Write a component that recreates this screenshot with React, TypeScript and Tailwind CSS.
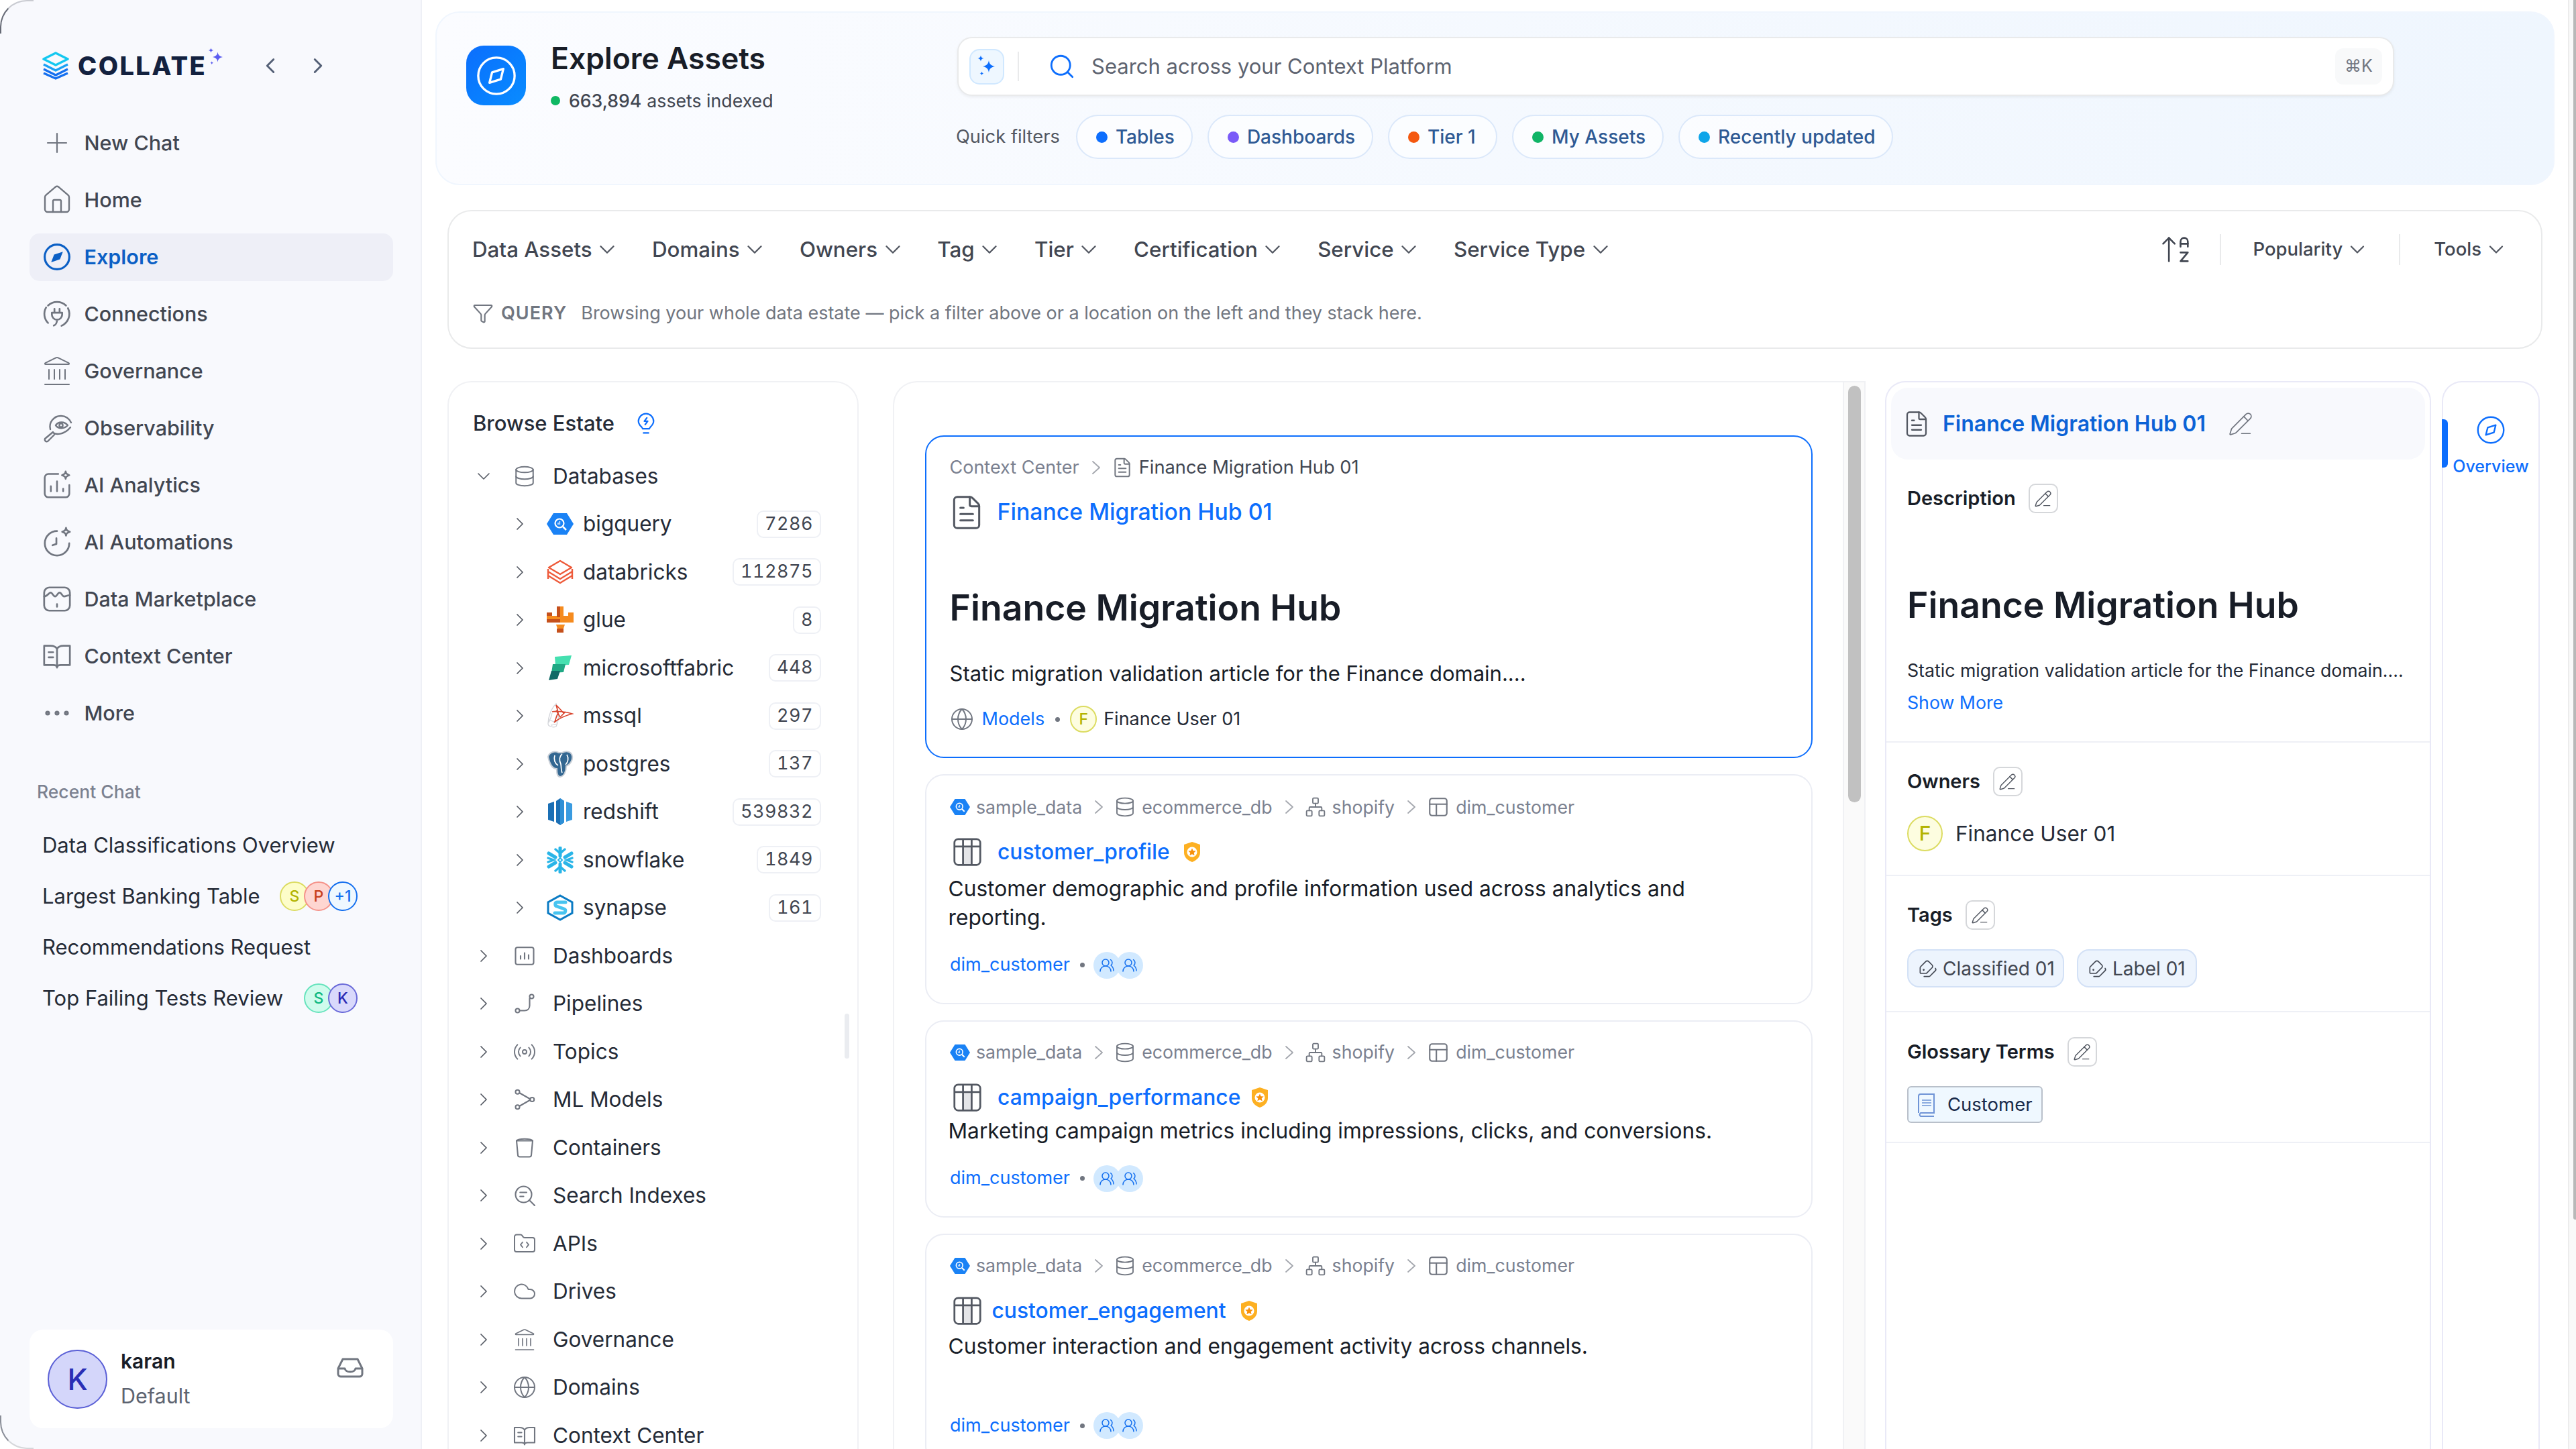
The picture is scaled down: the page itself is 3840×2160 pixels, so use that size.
import { ReactNode } from "react";
import {
  ArrowUpAZ,
  ChevronDown,
  ChevronLeft,
  ChevronRight,
  Cloud,
  Database,
  Ellipsis,
  FileText,
  FolderCode,
  Funnel,
  Globe,
  House,
  Landmark,
  Network,
  PencilLine,
  Plus,
  Radio,
  Search,
  Tags,
  UsersRound,
} from "lucide-react";

function Stroke({ size, children, color = "#717680", width = 1.4 }: { size: number; children: ReactNode; color?: string; width?: number }) {
  return (
    <svg width={size} height={size} viewBox="0 0 24 24" fill="none" stroke={color} strokeWidth={width} strokeLinecap="round" strokeLinejoin="round">
      {children}
    </svg>
  );
}

function Sparkles({ size, color }: { size: number; color: string }) {
  return (
    <svg width={size} height={size} viewBox="0 0 24 24" fill={color}>
      <path d="M14 6c.6 3.6 2 5.2 6 6-4 .8-5.4 2.4-6 6-.6-3.6-2-5.2-6-6 4-.8 5.400-2.400 6-6Z" />
      <path d="M6 1c.3 1.900 1 2.600 3 3-2 .4-2.700 1.100-3 3-.3-1.900-1-2.600-3-3 2-.4 2.700-1.100 3-3Z" />
      <path d="M7 17c.2 1.300.8 1.800 2 2-1.200.2-1.800.7-2 2-.2-1.300-.8-1.800-2-2 1.200-.2 1.800-.7 2-2Z" />
    </svg>
  );
}

function ExploreIcon() {
  return (
    <svg width="42" height="42" viewBox="0 0 24 24" fill="none">
      <circle cx="12" cy="12" r="10.500" stroke="#0b5fc5" strokeWidth="1.800" />
      <path d="M17 7.500 14.500 14 7 16.500 9.500 10Z" fill="#0b5fc5" />
    </svg>
  );
}

function CompassLine({ size, color, width }: { size: number; color: string; width: number }) {
  return (
    <svg width={size} height={size} viewBox="0 0 24 24" fill="none" stroke={color} strokeWidth={width} strokeLinejoin="round">
      <circle cx="12" cy="12" r="10.500" />
      <path d="M16 8 14.500 14 8 16 9.500 10Z" />
    </svg>
  );
}

const navIcons: Record<string, ReactNode> = {
  "New Chat": <Plus size={50} color="#717680" strokeWidth={1.1} />,
  Home: <House size={50} color="#717680" strokeWidth={1.2} />,
  Explore: <ExploreIcon />,
  Connections: (
    <Stroke size={46}>
      <path d="M5 5.500A10 10 0 0 1 19 5.500M20.500 7.500a10 10 0 0 1-5 13.700M5 19a10 10 0 0 1-1.500-12" />
      <path d="M8 11h8v1.500a4 4 0 0 1-8 0ZM10 8v3M14 8v3M12 16.500c0 2-1 4-2.500 4.500" />
    </Stroke>
  ),
  Governance: <Landmark size={56} color="#717680" strokeWidth={1} />,
  Observability: (
    <Stroke size={50} width={1.2}>
      <path d="M7 13a8 8 0 0 1 8-10 8 8 0 0 1 7.500 5M9 15.500c2 1.500 8 2 13-4" />
      <path d="M11 10c2-3 6.500-3 9 0-2.500 2.700-7 3-9 0Z" />
      <circle cx="15" cy="10" r="1.300" />
      <path d="M9 15 3 20a1.500 1.500 0 0 0 2 2l5-5" />
    </Stroke>
  ),
  "AI Analytics": (
    <Stroke size={44}>
      <path d="M13 3H5a3 3 0 0 0-3 3v13a3 3 0 0 0 3 3h14a3 3 0 0 0 3-3v-7" />
      <path d="M7 17v-4M12 17V9M17 17v-2" />
      <path d="M19 1c.3 1.700.8 2.200 3 3-2.200.8-2.700 1.300-3 3-.3-1.700-.8-2.200-3-3 2.200-.8 2.700-1.300 3-3Z" />
    </Stroke>
  ),
  "AI Automations": (
    <Stroke size={46}>
      <path d="M12 3.500a9.500 9.500 0 1 0 9.500 9.500" />
      <path d="M11.500 9v4.500l-3 1" />
      <path d="M19 1c.3 1.700.8 2.200 3 3-2.200.8-2.700 1.300-3 3-.3-1.700-.8-2.200-3-3 2.200-.8 2.700-1.300 3-3Z" />
    </Stroke>
  ),
  "Data Marketplace": (
    <Stroke size={46}>
      <rect x="2" y="3" width="20" height="18" rx="4" />
      <path d="M2 10c2.500 0 3.500-3 5-3s2 3 3.500 3S12.500 7 14 7s2 3 3.500 3 2.500-1 4.500-1M12 16v2" />
    </Stroke>
  ),
  "Context Center": (
    <Stroke size={46}>
      <path d="M12 6.500C11 4.500 9 4 7 4H2v15h7c1.700 0 3 .5 3 2 0-1.500 1.300-2 3-2h7V4h-5c-2 0-4 .5-5 2.500ZM12 6.500V21M5.500 9H9M5.500 13H9" />
    </Stroke>
  ),
  More: <Ellipsis size={56} color="#717680" strokeWidth={1.6} />,
};

function NavItem({ label, active }: { label: string; active?: boolean }) {
  return (
    <div className={active ? "flex h-[71px] items-center rounded-[15px] bg-[#eeeff7] pl-[17px] text-[30.500px] font-semibold text-[#0b5fc5]" : "flex h-[71px] items-center rounded-[15px] pl-[17px] text-[30.500px] font-medium text-[#414651]"}>
      <span className="flex w-[48px] items-center justify-center">{navIcons[label]}</span>
      <span className="ml-[16.500px]">{label}</span>
    </div>
  );
}

type BubbleProps = { text: string; className: string };

function Bubble({ text, className }: BubbleProps) {
  return <span className={"flex h-[44px] w-[44px] items-center justify-center rounded-full border-2 text-[23px] font-medium " + className}>{text}</span>;
}

function Sidebar() {
  return (
    <aside className="flex h-full w-[629px] shrink-0 flex-col rounded-l-[40px] border-r-2 border-[#eef0f6] bg-[#f8f9fd] pr-[41px] pl-[44px]">
      <div className="mt-[68px] flex h-[60px] items-center pl-[19px]">
        <svg width="40" height="42" viewBox="0 0 40 42" fill="none" strokeWidth="3.500" strokeLinejoin="round">
          <path d="M2 11 20 2l18 9-18 9Z" stroke="#14c8f0" fill="none" />
          <path d="M2 19l18 9 18-9" stroke="#1aa0f5" />
          <path d="M2 26l18 9 18-9" stroke="#1570ef" />
          <path d="M2 32l18 8 18-8" stroke="#1570ef" />
        </svg>
        <span className="ml-[13px] text-[38px] font-extrabold leading-none tracking-[2.400px] text-[#13213f]">COLLATE</span>
        <span className="-mt-[26px] -ml-[1px]">
          <Sparkles size={30} color="#5a5cf0" />
        </span>
        <ChevronLeft size={38} color="#535f75" strokeWidth={1.800} className="ml-[47px]" />
        <ChevronRight size={38} color="#535f75" strokeWidth={1.800} className="ml-[33px]" />
      </div>
      <nav className="mt-[49.500px] flex flex-col gap-[14px]">
        <NavItem label="New Chat" />
        <NavItem label="Home" />
        <NavItem label="Explore" active />
        <NavItem label="Connections" />
        <NavItem label="Governance" />
        <NavItem label="Observability" />
        <NavItem label="AI Analytics" />
        <NavItem label="AI Automations" />
        <NavItem label="Data Marketplace" />
        <NavItem label="Context Center" />
        <NavItem label="More" />
      </nav>
      <p className="mt-[62.500px] flex h-[40px] items-center pl-[11px] text-[26.500px] font-medium text-[#7b8190]">Recent Chat</p>
      <div className="mt-[37px] flex w-[489px] flex-col gap-[32px] pl-[19px] text-[31px] text-[#252b37]">
        <div className="flex h-[44px] items-center">Data Classifications Overview</div>
        <div className="flex h-[44px] items-center justify-between">
          Largest Banking Table
          <span className="flex">
            <Bubble text="S" className="border-[#dcdc62] bg-[#fdfdc9] text-[#b3b300]" />
            <Bubble text="P" className="-ml-[8px] border-[#f5938a] bg-[#fed6d1] text-[#c8401d]" />
            <Bubble text="+1" className="-ml-[8px] border-[#1570ef] bg-[#eff8ff] text-[#1570ef]" />
          </span>
        </div>
        <div className="flex h-[44px] items-center">Recommendations Request</div>
        <div className="flex h-[44px] items-center justify-between">
          Top Failing Tests Review
          <span className="flex">
            <Bubble text="S" className="border-[#66e3bd] bg-[#cffbec] text-[#10b981]" />
            <Bubble text="K" className="-ml-[8px] border-[#6a6ad9] bg-[#d9d9fb] text-[#2a2ab5]" />
          </span>
        </div>
      </div>
      <div className="mt-auto mb-[31px] flex h-[147px] items-center rounded-[20px] bg-white pl-[27px]">
        <span className="flex h-[88px] w-[89px] items-center justify-center rounded-full border-2 border-[#5a5fd6] bg-[#d4d6fa] text-[44px] font-medium text-[#2a2fb5]">K</span>
        <div className="-mt-[2px] ml-[20px] flex flex-col">
          <span className="text-[30px] leading-[52px] font-semibold text-[#181d27]">karan</span>
          <span className="text-[30.500px] leading-[52px] text-[#5d6370]">Default</span>
        </div>
        <svg className="mt-[-34px] ml-auto mr-[44px]" width="40" height="30" viewBox="0 0 40 30" fill="none" stroke="#717680" strokeWidth="3" strokeLinejoin="round">
          <path d="M9 2h22l7 14v8a4 4 0 0 1-4 4H6a4 4 0 0 1-4-4v-8Z" />
          <path d="M2 16h10c1 4 4 5 8 5s7-1 8-5h10" />
        </svg>
      </div>
    </aside>
  );
}

type PillProps = { label: string; dot: string; className?: string };

function Pill({ label, dot, className = "" }: PillProps) {
  return (
    <span className={"flex h-[66px] items-center gap-[12px] rounded-full border-2 border-[#dbe8fa] bg-white/60 pr-[25px] pl-[28px] text-[28px] font-medium text-[#2f5a94] " + className}>
      <span className={"h-[17px] w-[17px] rounded-full " + dot} />
      {label}
    </span>
  );
}

function Hero() {
  return (
    <section className="mx-[-18px] flex h-[259px] shrink-0 rounded-[36px] border-2 border-[#f0f6fe] bg-gradient-to-r from-[#fbfcff] to-[#eff6fe] pt-[36px] pl-[44px]">
      <div className="flex w-[732px] pt-[13px]">
        <span className="flex h-[89px] w-[89px] items-center justify-center rounded-[26px] bg-gradient-to-br from-[#0d6efd] to-[#0a8cff]">
          <CompassLine size={62} color="white" width={1.300} />
        </span>
        <div className="ml-[37px]">
          <h1 className="flex h-[38px] items-center text-[44.500px] font-semibold text-[#181d27]">Explore Assets</h1>
          <p className="mt-[27px] flex h-[34px] items-center text-[#414651]">
            <span className="mr-[13px] h-[14px] w-[14px] rounded-full bg-[#0fb863]" />
            <span className="text-[26.700px] font-medium">663,894</span>
            <span className="ml-[8px] text-[26.700px]">assets indexed</span>
          </p>
        </div>
      </div>
      <div className="w-[2142px]">
        <div className="flex h-[88px] items-center rounded-[22px] border-2 border-[#e9eaeb] bg-white pl-[16px] shadow-[0_2px_4px_rgba(10,13,18,0.06)]">
          <span className="flex h-[53px] w-[52px] items-center justify-center rounded-[15px] border-2 border-[#d0e8ff] bg-[#eef7ff]">
            <Sparkles size={36} color="#0d6efd" />
          </span>
          <span className="ml-[20px] h-[44px] w-[2px] bg-[#e9eaeb]" />
          <Search size={42} color="#0d6efd" strokeWidth={1.600} className="ml-[43px]" />
          <span className="ml-[23px] text-[31px] text-[#5d6370]">Search across your Context Platform</span>
          <span className="mr-[16px] ml-auto flex h-[54px] w-[70px] items-center justify-center rounded-[12px] bg-[#f8f9fa] text-[25px] text-[#717680]">⌘K</span>
        </div>
        <div className="mt-[28px] flex items-center">
          <span className="-ml-[2px] text-[27.300px] text-[#535862]">Quick filters</span>
          <div className="ml-[24px] flex gap-[22px]">
            <Pill label="Tables" dot="bg-[#0d6efd]" />
            <Pill label="Dashboards" dot="bg-[#7a5af8]" />
            <Pill label="Tier 1" dot="bg-[#f4580f]" className="w-[163px]" />
            <Pill label="My Assets" dot="bg-[#10b466]" />
            <Pill label="Recently updated" dot="bg-[#0ea5e9]" />
          </div>
        </div>
      </div>
    </section>
  );
}

function FilterItem({ label }: { label: string }) {
  return (
    <span className="flex items-center gap-[3.500px] text-[31.300px] font-medium text-[#414651]">
      {label}
      <ChevronDown size={38} color="#535862" strokeWidth={1.500} />
    </span>
  );
}

function ToolItem({ label }: { label: string }) {
  return (
    <span className="flex items-center gap-[4px] text-[27.500px] font-medium text-[#414651]">
      {label}
      <ChevronDown size={36} color="#535862" strokeWidth={1.500} />
    </span>
  );
}

function FilterBar() {
  return (
    <section className="mt-[37px] flex h-[207px] shrink-0 flex-col rounded-[36px] border-2 border-[#e9eaeb] bg-white pr-[49px] pt-[27px] pl-[35px]">
      <div className="flex h-[60px] items-center">
        <div className="flex gap-[47.800px]">
          <FilterItem label="Data Assets" />
          <FilterItem label="Domains" />
          <FilterItem label="Owners" />
          <FilterItem label="Tag" />
          <FilterItem label="Tier" />
          <FilterItem label="Certification" />
          <FilterItem label="Service" />
          <FilterItem label="Service Type" />
        </div>
        <div className="ml-auto flex h-[46px] items-center">
          <ArrowUpAZ size={52} color="#414651" strokeWidth={1.200} />
          <span className="ml-[39px] h-[46px] w-[2px] bg-[#e9eaeb]" />
          <span className="ml-[47px]"><ToolItem label="Popularity" /></span>
          <span className="ml-[44px] h-[46px] w-[2px] bg-[#e9eaeb]" />
          <span className="ml-[50px]"><ToolItem label="Tools" /></span>
        </div>
      </div>
      <div className="mt-[45px] flex h-[40px] items-center">
        <Funnel size={32} color="#717680" strokeWidth={1.600} />
        <span className="ml-[11px] text-[27px] font-semibold tracking-[1px] text-[#717680]">QUERY</span>
        <span className="ml-[21px] text-[27px] text-[#717680]">Browsing your whole data estate — pick a filter above or a location on the left and they stack here.</span>
      </div>
    </section>
  );
}

const BigQueryLogo = ({ size = 40 }: { size?: number }) => (
  <svg width={size} height={size} viewBox="0 0 40 40">
    <path d="M0 20 10 4h20l10 16-10 16H10Z" fill="#1a82f5" />
    <circle cx="19" cy="19" r="6.500" fill="none" stroke="white" strokeWidth="2.200" />
    <path d="M24 24l5 5" stroke="white" strokeWidth="2.500" />
    <path d="M17 21v-3M19.500 21v-5" stroke="white" strokeWidth="1.300" />
  </svg>
);

const logos: Record<string, ReactNode> = {
  bigquery: <BigQueryLogo />,
  databricks: (
    <svg width="40" height="40" viewBox="0 0 40 40" fill="none" stroke="#ee5b3b" strokeWidth="2.400" strokeLinejoin="round">
      <path d="M3 13 20 3l17 10-17 10Z" />
      <path d="M2 19l18 11 18-11M2 25l18 11 18-11" />
      <path d="M2 15v15M38 15v15" />
    </svg>
  ),
  glue: (
    <svg width="40" height="40" viewBox="0 0 40 40">
      <rect x="0" y="14" width="40" height="10" fill="#f58b1f" />
      <rect x="0" y="19" width="20" height="5" fill="#c5501c" />
      <rect x="15" y="0" width="10" height="16" fill="#f58b1f" />
      <rect x="15" y="0" width="5" height="16" fill="#c5501c" />
      <rect x="0" y="9" width="8" height="5" fill="#c5501c" />
      <rect x="32" y="9" width="8" height="5" fill="#f58b1f" />
      <path d="M14 27h13l-2 6h-9Z" fill="#f58b1f" />
      <rect x="15" y="33" width="10" height="6" fill="#c5501c" />
    </svg>
  ),
  microsoftfabric: (
    <svg width="40" height="40" viewBox="0 0 40 40">
      <path d="M12 3 37 1l-4 14-20 1Z" fill="#45e0b0" />
      <path d="M9 14 28 14l-3 12-18 1Z" fill="#1fa884" />
      <path d="M7 24h13l-4 12-13 2Z" fill="#106a66" />
    </svg>
  ),
  mssql: (
    <svg width="40" height="40" viewBox="0 0 40 40" fill="none" strokeWidth="1.300">
      <path d="M14 2c-8 8-12 20-12 30 0 4 8 6 12 4 3-6 4-14 3-22Z" stroke="#d3d5da" />
      <path d="M8 16c-1 5-3 10-5 14M3 26c4 2 8 3 12 3M6 34c3 0 6-1 9-2" stroke="#d3d5da" />
      <path d="M8 14c8-2 24 1 30 3-8 2-18 6-26 12 2-6 3-10 5-13-1-5-2-9-3-12 4 4 8 8 11 12M14 12l6 10 8-8" stroke="#d9452e" strokeWidth="1.700" />
    </svg>
  ),
  postgres: (
    <svg width="40" height="40" viewBox="0 0 40 40">
      <path d="M2 9C4 2 12 0 18 3h5c6-3 14-2 15 5 1 6-3 12-7 14-1 0-1 1-2 1 0 8-3 15-9 16-4 0-5-4-5-12-8 0-11-9-13-18Z" fill="#336791" stroke="#c7ced6" strokeWidth="2" />
      <path d="M12 7c-2 6 0 12 5 15M23 5c-4 3-5 9-2 15 1 5 0 9 2 13M30 6c3 5 2 11-2 15" fill="none" stroke="white" strokeWidth="1.700" />
    </svg>
  ),
  redshift: (
    <svg width="40" height="40" viewBox="0 0 40 40">
      <path d="M14 4 20 0l6 4v32l-6 4-6-4Z" fill="#1b6fb5" />
      <path d="M20 0l6 4v32l-6 4Z" fill="#2e8fd6" />
      <path d="M2 8l9-3v30l-9-3Z" fill="#1b6fb5" />
      <path d="M38 8l-9-3v30l9-3Z" fill="#3a9be0" />
    </svg>
  ),
  snowflake: (
    <svg width="40" height="40" viewBox="0 0 40 40" fill="none" stroke="#29b5e8" strokeLinecap="round">
      <path d="M20 2v12M20 26v12M3 10l10 6M27 24l10 6M37 10l-10 6M13 24 3 30" strokeWidth="5" />
      <path d="M13 4l7 6 7-6M13 36l7-6 7 6M2 17l8 3-8 3M38 17l-8 3 8 3" strokeWidth="3.400" />
      <path d="M20 17l3 3-3 3-3-3Z" strokeWidth="2" />
    </svg>
  ),
  synapse: (
    <svg width="40" height="40" viewBox="0 0 40 40" fill="none">
      <path d="M20 2 38 12v16L20 38 2 28V12Z" stroke="#0a7bc4" strokeWidth="3" />
      <path d="M28 12H15c-3 0-3 5 0 6l11 4c3 1 2 6-1 6H12" stroke="#47c4f0" strokeWidth="5" strokeLinecap="round" />
    </svg>
  ),
};

function CountRow({ name, count }: { name: string; count: string }) {
  return (
    <div className="flex h-[71.500px] items-center">
      <span className="ml-[54px] flex w-[32px] justify-center"><ChevronRight size={40} color="#535862" strokeWidth={1.300} /></span>
      <span className="ml-[23px] flex w-[41px] justify-center">{logos[name]}</span>
      <span className="ml-[14px] text-[31.500px] text-[#252b37]">{name}</span>
      <span className="ml-auto flex h-[41px] items-center rounded-[10px] border-2 border-[#eef0f5] px-[10px] text-[27px] tracking-[0.500px] text-[#414651] tabular-nums">{count}</span>
    </div>
  );
}

const topIcons: Record<string, ReactNode> = {
  Dashboards: (
    <Stroke size={36}>
      <rect x="3" y="3.500" width="18" height="17" rx="2" />
      <path d="M8 15v-3M12 15V9M16 15v-4" />
    </Stroke>
  ),
  Pipelines: (
    <Stroke size={36}>
      <circle cx="5" cy="19" r="2" />
      <circle cx="19" cy="5" r="2" />
      <path d="M7 19h5c3 0 5-2 5-5V7" />
    </Stroke>
  ),
  Topics: <Radio size={36} color="#717680" strokeWidth={1.300} />,
  "ML Models": (
    <Stroke size={36}>
      <circle cx="5" cy="4.500" r="2" />
      <circle cx="5" cy="19.500" r="2" />
      <circle cx="19.500" cy="12" r="2" />
      <path d="M7 5.500 17.500 11.500M7 18.500 17.500 12.500" />
    </Stroke>
  ),
  Containers: (
    <Stroke size={36}>
      <path d="M4 5h16l-1.300 14a2 2 0 0 1-2 2H7.300a2 2 0 0 1-2-2Z" />
      <path d="M4 5c2-2.500 14-2.500 16 0" />
    </Stroke>
  ),
  "Search Indexes": (
    <Stroke size={36}>
      <circle cx="11" cy="11" r="8" />
      <path d="m17 17 5 5M7.500 9H14M7.500 13H11" />
    </Stroke>
  ),
  APIs: <FolderCode size={36} color="#717680" strokeWidth={1.300} />,
  Drives: <Cloud size={38} color="#717680" strokeWidth={1.300} />,
  Governance: <Landmark size={46} color="#717680" strokeWidth={1.100} />,
  Domains: <Globe size={36} color="#717680" strokeWidth={1.300} />,
  "Context Center": (
    <Stroke size={36}>
      <path d="M12 6.500C11 4.500 9 4 7 4H2v15h7c1.700 0 3 .5 3 2 0-1.500 1.300-2 3-2h7V4h-5c-2 0-4 .5-5 2.500ZM12 6.500V21M5.500 9H9M5.500 13H9" />
    </Stroke>
  ),
};

function TopRow({ name }: { name: string }) {
  return (
    <div className="flex h-[71.500px] items-center">
      <span className="flex w-[32px] justify-center"><ChevronRight size={40} color="#535862" strokeWidth={1.300} /></span>
      <span className="ml-[27px] flex w-[36px] justify-center">{topIcons[name]}</span>
      <span className="ml-[24px] text-[31.500px] text-[#252b37]">{name}</span>
    </div>
  );
}

function BrowseEstate() {
  const counts = [
    ["bigquery", "7286"],
    ["databricks", "112875"],
    ["glue", "8"],
    ["microsoftfabric", "448"],
    ["mssql", "297"],
    ["postgres", "137"],
    ["redshift", "539832"],
    ["snowflake", "1849"],
    ["synapse", "161"],
  ];
  const tops = ["Dashboards", "Pipelines", "Topics", "ML Models", "Containers", "Search Indexes", "APIs", "Drives", "Governance", "Domains", "Context Center"];
  return (
    <section className="relative h-[1640px] w-[613px] shrink-0 rounded-[36px] border-2 border-[#f0f1f4] pt-[29px] pr-[54px] pl-[36px]">
      <div className="flex h-[64px] items-center">
        <h2 className="text-[31px] font-medium text-[#252b37]">Browse Estate</h2>
        <svg className="ml-[32px]" width="30" height="34" viewBox="0 0 24 27" fill="none" stroke="#0d6efd" strokeWidth="1.800" strokeLinecap="round" strokeLinejoin="round">
          <path d="M8 20c0-2-5-4-5-9a9 9 0 0 1 18 0c0 5-5 7-5 9Z" />
          <path d="M13 7l-3 4h4l-3 4M9 25h6" />
        </svg>
      </div>
      <div className="mt-[10.750px]">
        <div className="flex h-[71.500px] items-center">
          <span className="flex w-[32px] justify-center"><ChevronDown size={42} color="#535862" strokeWidth={1.200} /></span>
          <span className="ml-[27px] flex w-[36px] justify-center"><Database size={34} color="#717680" strokeWidth={1.400} /></span>
          <span className="ml-[24px] text-[31.500px] text-[#252b37]">Databases</span>
        </div>
        {counts.map(([name, count]) => <CountRow key={name} name={name} count={count} />)}
        {tops.map((name) => <TopRow key={name} name={name} />)}
      </div>
      <span className="absolute top-[941px] right-[12px] h-[67px] w-[7px] rounded-full bg-[#eaecf0]" />
    </section>
  );
}

function TableIcon() {
  return (
    <svg width="44" height="44" viewBox="0 0 24 24" fill="none" stroke="#535862" strokeWidth="1.500">
      <path d="M8.500 7.500h7v15h-7Z" fill="#e4e5e8" stroke="none" />
      <rect x="1.500" y="1.500" width="21" height="21" rx="3" />
      <path d="M1.500 7.500h21M8.500 1.500v21M15.500 1.500v21" />
    </svg>
  );
}

function Shield() {
  return (
    <svg width="26" height="32" viewBox="0 0 26 32">
      <path d="M13 1 25 5v12c0 7-6 12-12 14C7 29 1 24 1 17V5Z" fill="#fdb022" />
      <circle cx="13" cy="16" r="7.500" fill="#fff" />
      <path d="m13 10.500 1.700 3.700 4 .4-3 2.700.9 4-3.600-2.100-3.600 2.100.9-4-3-2.700 4-.4Z" fill="#f79009" />
    </svg>
  );
}

function Sep() {
  return (
    <svg className="mr-[16px] ml-[18px]" width="14" height="20" viewBox="0 0 14 20" fill="none" stroke="#a4a7ae" strokeWidth="1.800" strokeLinecap="round" strokeLinejoin="round">
      <path d="m2 1 10 9-10 9" />
    </svg>
  );
}

function Crumb({ icon, text }: { icon?: ReactNode; text: string }) {
  return (
    <span className="flex items-center gap-[9px]">
      {icon}
      {text}
    </span>
  );
}

function AssetCrumbs() {
  return (
    <div className="flex h-[40px] items-center text-[26.700px] text-[#7b8190]">
      <Crumb icon={<BigQueryLogo size={30} />} text="sample_data" />
      <Sep />
      <Crumb icon={<Database size={32} color="#717680" strokeWidth={1.400} />} text="ecommerce_db" />
      <Sep />
      <Crumb icon={<Network size={32} color="#717680" strokeWidth={1.400} />} text="shopify" />
      <Sep />
      <Crumb
        icon={
          <Stroke size={34} width={1.500}>
            <rect x="3" y="3" width="18" height="18" rx="2.500" />
            <path d="M3 9h18M10 9v12" />
          </Stroke>
        }
        text="dim_customer"
      />
    </div>
  );
}

function TeamBubble({ second }: { second?: boolean }) {
  return (
    <span className={second ? "-ml-[6px] flex h-[40px] w-[40px] items-center justify-center rounded-full bg-[#d1e9ff]" : "flex h-[40px] w-[40px] items-center justify-center rounded-full bg-[#d1e9ff]"}>
      <UsersRound size={24} color="#1570ef" strokeWidth={1.500} />
    </span>
  );
}

type AssetProps = {
  name: string;
  desc: string;
  titleGap: string;
  descClass: string;
  badgeGap: string;
  top: string;
};

function AssetCard({ name, desc, titleGap, descClass, badgeGap, top }: AssetProps) {
  return (
    <article className={"rounded-[28px] border-2 border-[#ebedf4] pr-[30px] pb-[35px] pl-[35.500px] " + top}>
      <AssetCrumbs />
      <div className="mt-[22px] flex h-[50px] items-center">
        <span className="ml-[4px]"><TableIcon /></span>
        <span className={"text-[31.800px] font-medium text-[#0d6efd] " + titleGap}>{name}</span>
        <span className={badgeGap}><Shield /></span>
      </div>
      <p className={"-ml-[2.500px] w-[1200px] text-[31.700px] leading-[43px] text-[#181d27] " + descClass}>{desc}</p>
      <div className="mt-[29px] flex h-[42px] items-center text-[27px] text-[#0d6efd]">
        dim_customer
        <span className="mr-[13px] ml-[15px] h-[7px] w-[7px] rounded-full bg-[#717680]" />
        <TeamBubble />
        <TeamBubble second />
      </div>
    </article>
  );
}

function FeaturedCard() {
  return (
    <article className="rounded-[28px] border-[2.500px] border-[#0d6efd] pt-[26px] pr-[30px] pb-[35px] pl-[35px]">
      <div className="flex h-[40px] items-center text-[27px]">
        <span className="text-[#7b8190]">Context Center</span>
        <Sep />
        <FileText size={32} color="#717680" strokeWidth={1.500} className="mr-[9px]" />
        <span className="text-[27.300px] text-[#414651]">Finance Migration Hub 01</span>
      </div>
      <div className="mt-[21.500px] flex h-[50px] items-center">
        <FileText size={56} color="#535862" strokeWidth={1.300} className="-ml-[3px]" />
        <span className="ml-[18px] text-[33.800px] font-medium text-[#0d6efd]">Finance Migration Hub 01</span>
      </div>
      <h2 className="mt-[83px] flex h-[70px] items-center text-[53.500px] font-semibold text-[#181d27]">Finance Migration Hub</h2>
      <p className="mt-[41px] flex h-[44px] items-center text-[31px] text-[#181d27]">Static migration validation article for the Finance domain....</p>
      <div className="mt-[24.500px] flex h-[42px] items-center text-[27px]">
        <Globe size={36} color="#717680" strokeWidth={1.300} />
        <span className="ml-[12px] text-[#0d6efd]">Models</span>
        <span className="mr-[15px] ml-[16px] h-[7px] w-[7px] rounded-full bg-[#717680]" />
        <span className="flex h-[40px] w-[40px] items-center justify-center rounded-full border-2 border-[#dcdc62] bg-[#fdfde0] text-[23px] font-medium text-[#b3b300]">F</span>
        <span className="ml-[10px] text-[#252b37]">Finance User 01</span>
      </div>
    </article>
  );
}

function ResultList() {
  return (
    <section className="flex h-[1640px] w-[1450px] shrink-0 rounded-tl-[36px] border-t-2 border-l-2 border-[#f0f1f4]">
      <div className="flex w-[1414px] flex-col gap-[24px] pt-[79px] pl-[45.500px] pr-[45px]">
        <FeaturedCard />
        <AssetCard top="pt-[27px]" name="customer_profile" titleGap="ml-[23px]" badgeGap="ml-[20px]" descClass="mt-[7.500px] h-[86px]" desc="Customer demographic and profile information used across analytics and reporting." />
        <AssetCard top="pt-[26px]" name="campaign_performance" titleGap="ml-[23px]" badgeGap="ml-[16px]" descClass="mt-[3px] h-[43px]" desc="Marketing campaign metrics including impressions, clicks, and conversions." />
        <AssetCard top="pt-[26px]" name="customer_engagement" titleGap="ml-[14.500px]" badgeGap="ml-[21px]" descClass="mt-[6.500px] h-[90px]" desc="Customer interaction and engagement activity across channels." />
      </div>
      <div className="w-[34px] border-x-2 border-[#f0f1f4] bg-[#fafafa] pt-[5px] pl-[6px]">
        <div className="h-[621px] w-[19px] rounded-full bg-[#c1c1c1]" />
      </div>
    </section>
  );
}

function EditButton() {
  return (
    <span className="flex h-[44px] w-[44px] items-center justify-center rounded-[10px] border-2 border-[#d5d7da]">
      <PencilLine size={27} color="#535862" strokeWidth={1.300} />
    </span>
  );
}

function SectionTitle({ title }: { title: string }) {
  return (
    <div className="flex h-[44px] items-center gap-[19px] text-[29px] font-semibold text-[#181d27]">
      {title}
      <EditButton />
    </div>
  );
}

function TagChip({ label, className }: { label: string; className: string }) {
  return (
    <span className={"flex h-[57px] items-center gap-[8px] rounded-[18px] border-2 border-[#d3e1f6] bg-[#edf4fd] text-[28px] text-[#414651] " + className}>
      <Tags size={28} color="#414651" strokeWidth={1.400} className="-rotate-90" />
      {label}
    </span>
  );
}

function DetailPanel() {
  return (
    <section className="h-[1640px] w-[814px] shrink-0 rounded-t-[30px] border-x-2 border-t-2 border-[#e9e9f7]">
      <div className="mx-[7px] mt-[8px] flex h-[107px] items-center rounded-[25px] bg-[#f8f9fd] pl-[17px]">
        <FileText size={42} color="#535862" strokeWidth={1.300} />
        <span className="ml-[18px] text-[32px] font-semibold text-[#0b62d6]">Finance Migration Hub 01</span>
        <PencilLine size={38} color="#717680" strokeWidth={1.100} className="ml-[33px]" />
      </div>
      <div className="border-b-2 border-[#eef0f6] pr-[20px] pb-[36px] pl-[31px]">
        <div className="mt-[36px]"><SectionTitle title="Description" /></div>
        <h2 className="mt-[102px] flex h-[70px] items-center text-[53.500px] font-semibold text-[#181d27]">Finance Migration Hub</h2>
        <p className="mt-[40px] flex h-[44px] items-center text-[26.700px] text-[#252b37]">Static migration validation article for the Finance domain....</p>
        <p className="mt-[4px] flex h-[44px] items-center text-[26.700px] text-[#0d6efd]">Show More</p>
      </div>
      <div className="border-b-2 border-[#eef0f6] pb-[35px] pl-[31px]">
        <div className="pt-[36px]"><SectionTitle title="Owners" /></div>
        <div className="mt-[29px] flex h-[53px] items-center">
          <span className="flex h-[53px] w-[53px] items-center justify-center rounded-full border-2 border-[#dcdc62] bg-[#fdfde0] text-[30px] font-medium text-[#b3b300]">F</span>
          <span className="ml-[19px] text-[31.500px] text-[#252b37]">Finance User 01</span>
        </div>
      </div>
      <div className="border-b-2 border-[#eef0f6] pb-[35px] pl-[31px]">
        <div className="pt-[36px]"><SectionTitle title="Tags" /></div>
        <div className="mt-[29px] flex gap-[19px]">
          <TagChip label="Classified 01" className="w-[234px] pl-[15px]" />
          <TagChip label="Label 01" className="w-[179px] pl-[15px]" />
        </div>
      </div>
      <div className="border-b-2 border-[#eef0f6] pb-[28px] pl-[31px]">
        <div className="pt-[37px]"><SectionTitle title="Glossary Terms" /></div>
        <div className="mt-[29px] flex h-[55px] w-[202px] items-center gap-[18px] rounded-[6px] border-2 border-[#b9c0ca] bg-[#eff8ff] pl-[12px] text-[27.500px] text-[#1a2b4b]">
          <svg width="28" height="36" viewBox="0 0 28 36" fill="none" stroke="#6f94d6" strokeWidth="2">
            <path d="M3 30V5a3 3 0 0 1 3-3h20v28H6a3 3 0 0 0 0 5h20" />
            <path d="M8 11h14M8 15h14M8 19h14" strokeWidth="1.500" />
          </svg>
          Customer
        </div>
      </div>
    </section>
  );
}

function OverviewRail() {
  return (
    <aside className="relative h-[1640px] w-[146px] shrink-0 rounded-t-[30px] border-x-2 border-t-2 border-[#e9e9f7]">
      <span className="absolute top-[55px] -left-[2px] h-[72px] w-[9px] rounded-r-[6px] bg-[#0d6efd]" />
      <div className="flex flex-col items-center pt-[49px]">
        <CompassLine size={44} color="#0d6efd" width={1.300} />
        <span className="mt-[14px] text-[25px] font-medium text-[#0d6efd]">Overview</span>
      </div>
    </aside>
  );
}

export default function App() {
  return (
    <div className="relative flex h-[2160px] w-[3840px] overflow-hidden bg-white font-['Inter',sans-serif]">
      <Sidebar />
      <main className="flex min-w-0 flex-1 flex-col pt-[17px] pr-[50px] pl-[38px]">
        <Hero />
        <FilterBar />
        <div className="mt-[48px] flex min-h-0 flex-1 overflow-hidden">
          <BrowseEstate />
          <div className="ml-[51px]"><ResultList /></div>
          <div className="ml-[29px]"><DetailPanel /></div>
          <div className="ml-[16px]"><OverviewRail /></div>
        </div>
      </main>
      <span className="absolute top-0 left-0 h-[50px] w-[50px] rounded-tl-[40px] border-t-2 border-l-2 border-t-[#c9cbd1] border-l-[#666a75]" />
      <span className="absolute bottom-0 left-0 h-[50px] w-[50px] rounded-bl-[40px] border-b-2 border-l-2 border-b-[#d5d7da] border-l-[#8a8e98]" />
      <div className="absolute top-0 right-0 h-full w-[12px] border-l-2 border-[#ececec] bg-[#f9f9f9]">
        <div className="ml-auto h-[1818px] w-[4px] rounded-bl-[3px] bg-[#b8b8b8]" />
      </div>
    </div>
  );
}
